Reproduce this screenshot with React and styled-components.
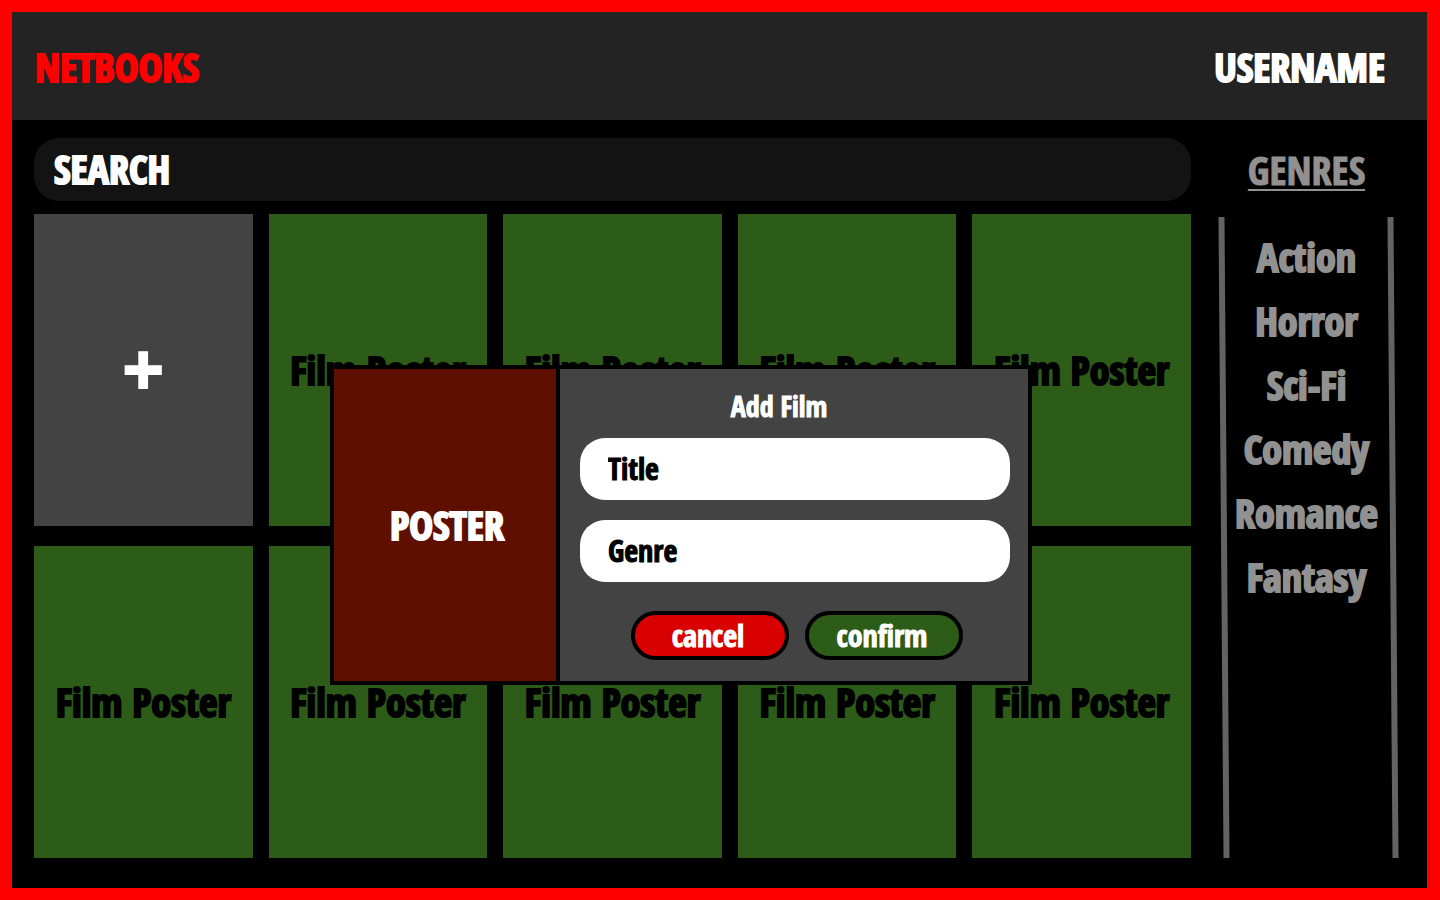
import React from "react";
import styled, { createGlobalStyle } from "styled-components";

const colors = {
  frame: "#ff0000",
  header: "#232323",
  search: "#131313",
  panel: "#434343",
  film: "#2c5c18",
  poster: "#5f0f00",
  cancel: "#d80000",
  muted: "#919191",
  rail: "#636363",
};

const GlobalStyle = createGlobalStyle`
  *, *::before, *::after { box-sizing: border-box; }
  body {
    margin: 0;
    background: #000;
    font-family: Impact, "Open Sans Condensed", "Liberation Sans Narrow", "Roboto Condensed", "DejaVu Sans Condensed", sans-serif;
    font-weight: 700;
    -webkit-text-stroke: 2px currentColor;
  }
  button, input { font: inherit; -webkit-text-stroke: inherit; }
  h1, h2, ul { margin: 0; padding: 0; font: inherit; }
  ul { list-style: none; }
  a { color: inherit; text-decoration: none; }
`;

const Frame = styled.div`
  position: relative;
  display: flex;
  flex-direction: column;
  min-height: 100vh;
  border: 12px solid ${colors.frame};
  border-right-width: 13px;
`;

const Header = styled.header`
  display: flex;
  align-items: center;
  justify-content: space-between;
  height: 108px;
  padding: 2px 42px 0 23px;
  background: ${colors.header};
  font-size: 40px;
  line-height: 48px;
`;

const Brand = styled.h1`
  color: ${colors.frame};
`;

const UserLink = styled.a`
  color: #fff;
`;

const Body = styled.div`
  flex: 1;
  display: grid;
  grid-template-columns: minmax(0, 1fr) 175px;
  column-gap: 30px;
  padding: 18px 31px 30px 22px;
`;

const Library = styled.main`
  display: flex;
  flex-direction: column;
  gap: 13px;
`;

const SearchInput = styled.input`
  width: 100%;
  height: 63px;
  padding: 0 20px 2px;
  border: 0;
  border-radius: 25px;
  background: ${colors.search};
  color: #fff;
  font-size: 40px;
  &::placeholder { color: #fff; opacity: 1; }
`;

const FilmGrid = styled.ul`
  flex: 1;
  display: grid;
  grid-template-columns: repeat(5, minmax(0, 1fr));
  grid-auto-rows: minmax(312px, 1fr);
  gap: 20px 16px;
`;

const GridItem = styled.li`
  display: flex;
`;

const Card = styled.button`
  flex: 1;
  padding: 0;
  border: 0;
  background: ${(p) => (p.$add ? colors.panel : colors.film)};
  color: ${(p) => (p.$add ? "#fff" : "#000")};
  font-family: ${(p) => (p.$add ? '"Liberation Sans", sans-serif' : "inherit")};
  font-size: ${(p) => (p.$add ? 70 : 40)}px;
  line-height: 48px;
  white-space: nowrap;
`;

const Sidebar = styled.aside`
  display: flex;
  flex-direction: column;
  color: ${colors.muted};
  text-align: center;
`;

const SidebarTitle = styled.h2`
  height: 79px;
  padding: 8px 4px 0 0;
  font-size: 40px;
  line-height: 48px;
  -webkit-text-stroke-width: 1px;
  text-decoration: underline;
  text-decoration-thickness: 2px;
  text-underline-offset: 4px;
`;

const GenreList = styled.ul`
  position: relative;
  flex: 1;
  padding: 8px 4px 0 0;
  &::before {
    content: "";
    position: absolute;
    inset: 0;
    border: solid ${colors.rail};
    border-width: 0 6px;
    transform: skewX(0.45deg);
    pointer-events: none;
  }
`;

const Genre = styled.li`
  font-size: 40px;
  line-height: 64px;
`;

const Dialog = styled.section`
  position: absolute;
  top: 353px;
  left: 318px;
  display: grid;
  grid-template-columns: 226px 468px;
  width: 702px;
  height: 320px;
  border: 4px solid #000;
  background: ${colors.panel};
`;

const PosterSlot = styled.button`
  padding: 0 0 2px 4px;
  border: 0;
  border-right: 4px solid #000;
  background: ${colors.poster};
  color: #fff;
  font-size: 40px;
`;

const Form = styled.form`
  display: flex;
  flex-direction: column;
  gap: 20px;
  padding: 20px 18px 20px 20px;
  -webkit-text-stroke-width: 1px;
`;

const DialogTitle = styled.h2`
  height: 29px;
  padding-right: 32px;
  color: #fff;
  font-size: 28px;
  line-height: 34px;
  text-align: center;
`;

const Field = styled.input`
  width: 100%;
  height: 62px;
  padding: 0 28px 2px;
  border: 0;
  border-radius: 25px;
  background: #fff;
  color: #000;
  font-size: 30px;
  &::placeholder { color: #000; opacity: 1; }
`;

const Actions = styled.div`
  display: flex;
  justify-content: center;
  gap: 16px;
  padding: 9px 0 0 4px;
`;

const ActionButton = styled.button`
  width: 158px;
  height: 49px;
  padding: 0 4px 0 0;
  border: 4px solid #000;
  border-radius: 25px;
  background: ${(p) => (p.$confirm ? colors.film : colors.cancel)};
  color: #fff;
  font-size: 30px;
  line-height: 38px;
`;

const genres = ["Action", "Horror", "Sci-Fi", "Comedy", "Romance", "Fantasy"];
const films = Array.from({ length: 9 }, (_, i) => ({ id: i, title: "Film Poster" }));

export default function App() {
  return (
    <>
      <GlobalStyle />
      <Frame>
        <Header>
          <Brand>NETBOOKS</Brand>
          <UserLink href="#account">USERNAME</UserLink>
        </Header>
        <Body>
          <Library>
            <SearchInput type="text" aria-label="Search" placeholder="SEARCH" />
            <FilmGrid>
              <GridItem>
                <Card type="button" $add aria-label="Add film">+</Card>
              </GridItem>
              {films.map((film) => (
                <GridItem key={film.id}>
                  <Card type="button">{film.title}</Card>
                </GridItem>
              ))}
            </FilmGrid>
          </Library>
          <Sidebar>
            <SidebarTitle>GENRES</SidebarTitle>
            <GenreList>
              {genres.map((genre) => (
                <Genre key={genre}>
                  <a href={`#${genre.toLowerCase()}`}>{genre}</a>
                </Genre>
              ))}
            </GenreList>
          </Sidebar>
        </Body>
        <Dialog role="dialog" aria-labelledby="add-film-title">
          <PosterSlot type="button">POSTER</PosterSlot>
          <Form onSubmit={(e) => e.preventDefault()}>
            <DialogTitle id="add-film-title">Add Film</DialogTitle>
            <Field type="text" aria-label="Title" placeholder="Title" />
            <Field type="text" aria-label="Genre" placeholder="Genre" />
            <Actions>
              <ActionButton type="button">cancel</ActionButton>
              <ActionButton type="submit" $confirm>confirm</ActionButton>
            </Actions>
          </Form>
        </Dialog>
      </Frame>
    </>
  );
}
